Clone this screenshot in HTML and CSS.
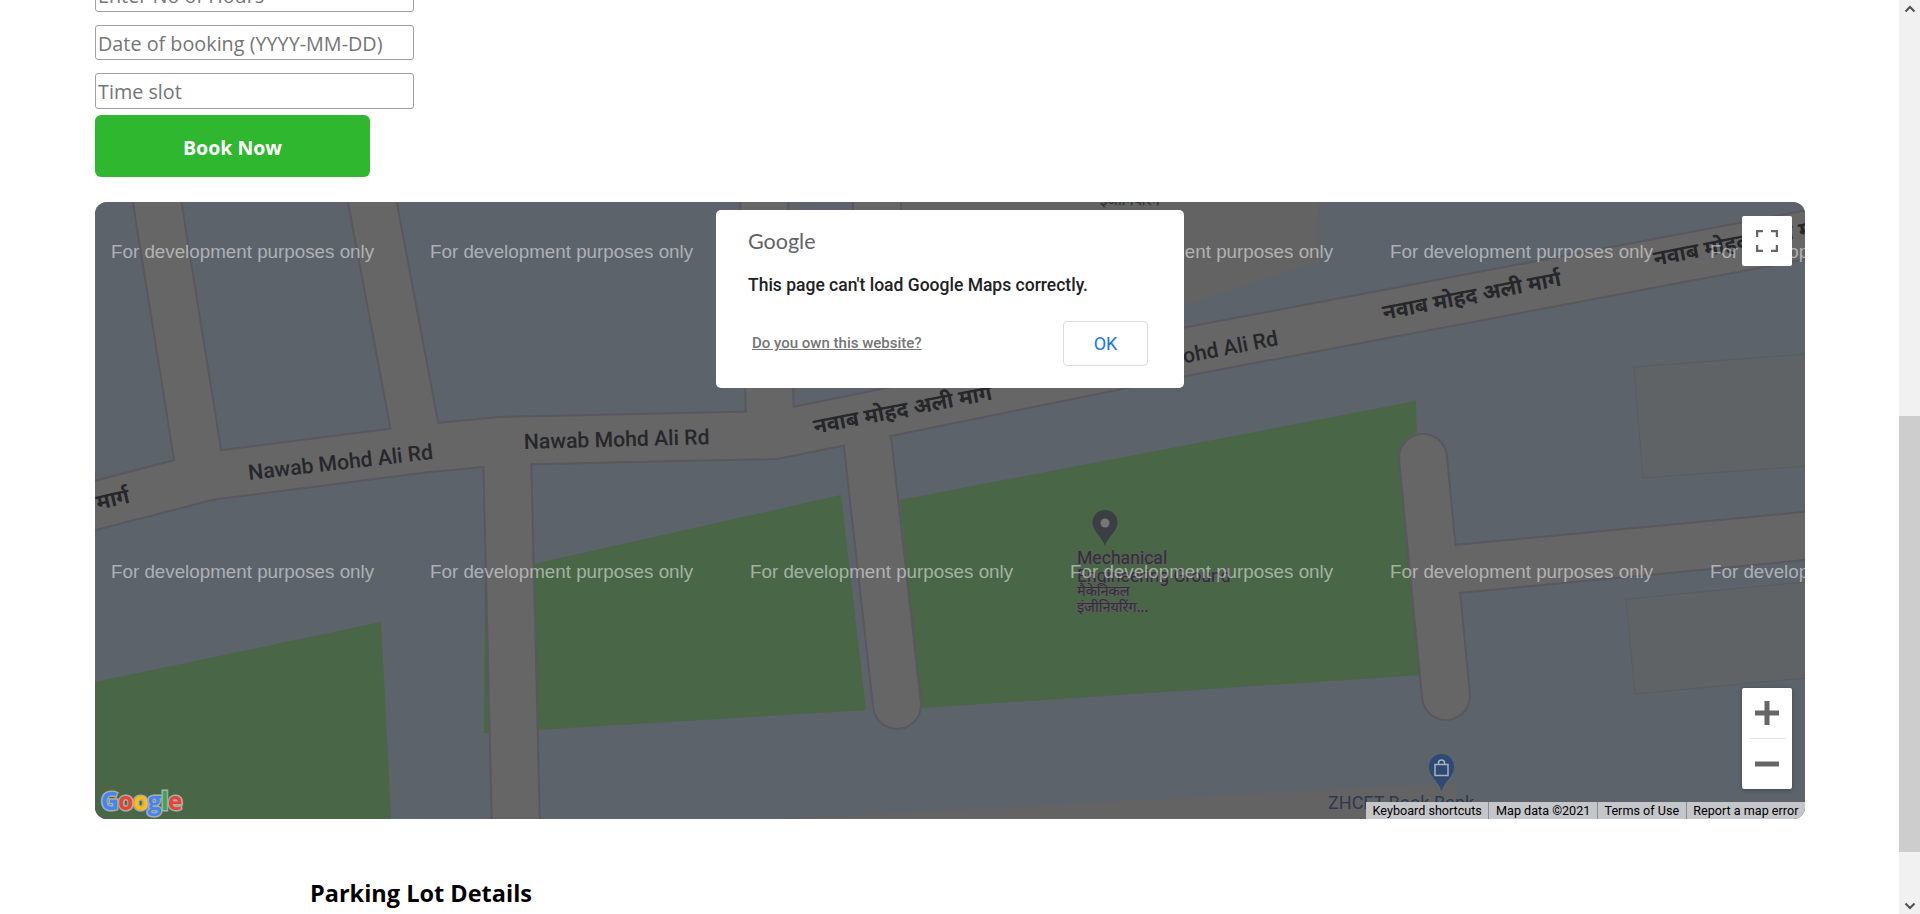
FILE: index.html
```html
<!DOCTYPE html>
<html lang="en">
<head>
  <meta charset="UTF-8">
  <meta name="viewport" content="width=device-width, initial-scale=1.0">
  <title>Book Parking</title>
  <link rel="stylesheet" href="styles.css">
</head>
<body>

<main class="page">
  <form class="booking-form">
    <input type="text" placeholder="Enter No of Hours">
    <input type="text" placeholder="Date of booking (YYYY-MM-DD)">
    <input type="text" placeholder="Time slot">
    <button type="button" class="book-btn">Book Now</button>
  </form>

  <div class="map">
    <svg class="map-canvas" viewBox="95 202 1710 617" width="1710" height="617">
      <rect x="95" y="202" width="1710" height="617" fill="#5c636b"/>

      <!-- parks -->
      <polygon class="park" points="900,500 1416,401 1421,675 920,708"/>
      <polygon class="park" points="485,575 841,495 866,710 484,733"/>
      <polygon class="park" points="95,682 381,622 391,819 95,819"/>

      <!-- buildings -->
      <polygon class="building" points="1634,367 1806,354 1806,466 1643,478"/>
      <polygon class="building" points="1626,599 1806,582 1806,678 1635,694"/>
      <polygon class="building-plain" points="900,196 1318,196 1320,261 1184,305 900,330"/>
      <polygon class="building-plain" points="769,820 1456,783 1456,820"/>

      <!-- road outlines first, fills on top so the junctions join up -->
      <g class="road-edge">
        <line x1="156" y1="195" x2="200" y2="470"/>
        <line x1="371" y1="195" x2="417" y2="440"/>
        <line x1="764" y1="195" x2="770" y2="420"/>
        <line x1="877" y1="195" x2="877" y2="300"/>
        <polyline points="85,508 209,476 428,448 502,441 775,435 1184,352 1815,233"/>
        <line x1="507" y1="450" x2="516" y2="830"/>
        <line x1="868" y1="446" x2="897" y2="705"/>
        <line x1="1423" y1="458" x2="1446" y2="696"/>
        <line x1="1446" y1="570" x2="1815" y2="535"/>
      </g>
      <g class="road-fill">
        <line x1="156" y1="195" x2="200" y2="470"/>
        <line x1="371" y1="195" x2="417" y2="440"/>
        <line x1="764" y1="195" x2="770" y2="420"/>
        <line x1="877" y1="195" x2="877" y2="300"/>
        <polyline points="85,508 209,476 428,448 502,441 775,435 1184,352 1815,233"/>
        <line x1="507" y1="450" x2="516" y2="830"/>
        <line x1="868" y1="446" x2="897" y2="705"/>
        <line x1="1423" y1="458" x2="1446" y2="696"/>
        <line x1="1446" y1="570" x2="1815" y2="535"/>
      </g>

      <!-- road names -->
      <text class="road-name" transform="translate(249 480) rotate(-6.5)">Nawab Mohd Ali Rd</text>
      <text class="road-name" transform="translate(524 449) rotate(-1.5)">Nawab Mohd Ali Rd</text>
      <text class="road-name" text-anchor="end" transform="translate(1279 345) rotate(-11)">Nawab Mohd Ali Rd</text>
      <text class="road-name hi" transform="translate(98 510) rotate(-13)">मार्ग</text>
      <text class="road-name hi" transform="translate(815 434) rotate(-11)">नवाब मोहद अली मार्ग</text>
      <text class="road-name hi" transform="translate(1384 320) rotate(-11)">नवाब मोहद अली मार्ग</text>
      <text class="road-name hi" transform="translate(1655 266) rotate(-11)">नवाब मोहद अली मार्ग</text>

      <!-- places -->
      <text class="place-name hi-small" x="1100" y="205">इंजीनियरिंग</text>
      <path class="pin-dark" d="M1105 510c-7 0-12.500 5.500-12.500 12.500 0 9 9 13 12.500 23.500 3.500-10.500 12.500-14.500 12.500-23.500 0-7-5.500-12.500-12.500-12.500z"/>
      <circle cx="1105" cy="523" r="4.500" fill="#767676"/>
      <text class="place-name" x="1077" y="564">Mechanical</text>
      <text class="place-name" x="1077" y="582">Engineering Ground</text>
      <text class="place-name hi-small" x="1077" y="596">मैकेनिकल</text>
      <text class="place-name hi-small" x="1077" y="612">इंजीनियरिंग...</text>

      <path class="pin-blue" d="M1441.500 754c-7 0-12.500 5.500-12.500 13 0 10 9 13 12.500 24 3.500-11 12.500-14 12.500-24 0-7.500-5.500-13-12.500-13z"/>
      <path class="bag" d="M1435 764.500h13v11h-13zM1438.500 764.500v-1.500a3 3 0 0 1 6 0v1.500"/>
      <text class="shop-name" x="1328" y="809">ZHCET Book Bank</text>

      <!-- watermark -->
      <g class="watermark">
        <text x="111" y="258">For development purposes only</text>
        <text x="430" y="258">For development purposes only</text>
        <text x="1070" y="258">For development purposes only</text>
        <text x="1390" y="258">For development purposes only</text>
        <text x="1710" y="258">For development purposes only</text>
        <text x="111" y="578">For development purposes only</text>
        <text x="430" y="578">For development purposes only</text>
        <text x="750" y="578">For development purposes only</text>
        <text x="1070" y="578">For development purposes only</text>
        <text x="1390" y="578">For development purposes only</text>
        <text x="1710" y="578">For development purposes only</text>
      </g>

      <text class="google-mark" x="101" y="810"><tspan fill="#4285f4">G</tspan><tspan fill="#ea4335">o</tspan><tspan fill="#fbbc05">o</tspan><tspan fill="#4285f4">g</tspan><tspan fill="#34a853">l</tspan><tspan fill="#ea4335">e</tspan></text>
    </svg>

    <div class="dialog">
      <div class="dialog-logo">Google</div>
      <div class="dialog-msg">This page can't load Google Maps correctly.</div>
      <div class="dialog-foot">
        <a class="dialog-link" href="#">Do you own this website?</a>
        <button type="button" class="dialog-ok">OK</button>
      </div>
    </div>

    <button type="button" class="map-btn fullscreen" aria-label="Toggle fullscreen view">
      <svg viewBox="0 0 22 22" width="22" height="22">
        <path d="M1 7V1h6M15 1h6v6M21 15v6h-6M7 21H1v-6" fill="none" stroke="#666" stroke-width="2.500"/>
      </svg>
    </button>

    <div class="zoom-ctl">
      <button type="button" class="zoom-btn" aria-label="Zoom in">
        <svg viewBox="0 0 24 24" width="24" height="24"><path d="M0 12h24M12 0v24" stroke="#666" stroke-width="5"/></svg>
      </button>
      <div class="zoom-sep"></div>
      <button type="button" class="zoom-btn" aria-label="Zoom out">
        <svg viewBox="0 0 24 24" width="24" height="24"><path d="M0 12h24" stroke="#666" stroke-width="5"/></svg>
      </button>
    </div>

    <div class="attribution">
      <span class="attr-item kb">Keyboard shortcuts</span>
      <span class="attr-item data">Map data ©2021</span>
      <span class="attr-item terms">Terms of Use</span>
      <span class="attr-item report">Report a map error</span>
    </div>
  </div>

  <h2 class="lot-title">Parking Lot Details</h2>
</main>

<aside class="scrollbar">
  <div class="scroll-arrow">
    <svg viewBox="0 0 12 8" width="12" height="8"><path d="M1.500 6.500L6 2l4.500 4.500" fill="none" stroke="#505050" stroke-width="2"/></svg>
  </div>
  <div class="scroll-track"><div class="scroll-thumb"></div></div>
  <div class="scroll-arrow">
    <svg viewBox="0 0 12 8" width="12" height="8"><path d="M1.500 1.500L6 6l4.500-4.500" fill="none" stroke="#505050" stroke-width="2"/></svg>
  </div>
</aside>

</body>
</html>
```

FILE: styles.css
```css
* {
  box-sizing: border-box;
}

html, body {
  height: 100%;
}

body {
  margin: 0;
  display: flex;
  height: 100vh;
  overflow: hidden;
  background-color: white;
  font-family: 'Open Sans', 'Noto Sans', Arial, sans-serif;
}

.page {
  flex: 1;
  min-width: 0;
  padding: 0 94px 0 95px;
}

.booking-form {
  display: flex;
  flex-direction: column;
  align-items: flex-start;
  margin-top: -23.4px;
}

.booking-form input {
  width: 319px;
  height: 35.4px;
  margin-bottom: 12.9px;
  padding: 2px 2px 0;
  font-family: 'Open Sans', sans-serif;
  font-size: 19.8px;
  border: 1px solid #a0a0a0;
  border-radius: 3px;
}

.booking-form input::placeholder {
  color: #757575;
}

.book-btn {
  width: 275px;
  height: 62px;
  margin-top: -6.7px;
  padding: 3px 0 0;
  border: none;
  border-radius: 6px;
  background-color: #30b730;
  color: white;
  font-family: 'Open Sans', sans-serif;
  font-size: 19.5px;
  font-weight: 700;
}

.map {
  position: relative;
  height: 617px;
  margin-top: 25px;
  border-radius: 12px;
  overflow: hidden;
  box-shadow: inset 0 0 0 1px #8f8f8f;
}

.map-canvas {
  display: block;
}

.park {
  fill: #496647;
}

.building {
  fill: #5f6366;
  stroke: #5a5c60;
  stroke-width: 1;
}

.building-plain {
  fill: #636363;
}

.road-edge {
  fill: none;
  stroke: #58585e;
  stroke-width: 50;
  stroke-linecap: round;
  stroke-linejoin: round;
}

.road-fill {
  fill: none;
  stroke: #666666;
  stroke-width: 46;
  stroke-linecap: round;
  stroke-linejoin: round;
}

.road-name {
  font-family: Roboto, sans-serif;
  font-size: 21.2px;
  font-weight: 500;
  fill: #26272a;
}

.road-name.hi {
  font-family: 'Noto Sans', 'Noto Sans Devanagari', sans-serif;
  font-weight: 700;
  font-size: 21.5px;
}

.pin-dark {
  fill: #3b3f45;
}

.pin-blue {
  fill: #2d4a75;
}

.bag {
  fill: none;
  stroke: #aab1bb;
  stroke-width: 1.500;
}

.place-name {
  font-family: Roboto, sans-serif;
  font-size: 17.6px;
  fill: #2e3034;
  stroke: #5c5c5c;
  stroke-width: 2px;
  paint-order: stroke;
}

.place-name.hi-small {
  font-family: 'Noto Sans', 'Noto Sans Devanagari', sans-serif;
  font-size: 14.5px;
}

.shop-name {
  font-family: Roboto, sans-serif;
  font-size: 18px;
  fill: #2b3a50;
}

.watermark text {
  font-family: 'Liberation Sans', Arial, sans-serif;
  font-size: 18.8px;
  fill: rgba(255, 255, 255, 0.5);
}

.google-mark {
  font-family: 'Open Sans', sans-serif;
  font-size: 24.500px;
  font-weight: 700;
  stroke: #a9ada6;
  stroke-width: 3px;
  paint-order: stroke;
  letter-spacing: -0.5px;
}

.dialog {
  position: absolute;
  top: 8px;
  left: 50%;
  width: 468px;
  height: 178px;
  margin-left: -234px;
  padding: 18px 36px 22px 32px;
  display: flex;
  flex-direction: column;
  background-color: white;
  border-radius: 5px;
}

.dialog-logo {
  font-family: Lato, sans-serif;
  font-size: 21.5px;
  line-height: 26px;
  color: #5f6368;
}

.dialog-msg {
  margin-top: 19px;
  font-family: Roboto, sans-serif;
  font-size: 17.5px;
  font-weight: 500;
  line-height: 24px;
  color: #202124;
}

.dialog-foot {
  display: flex;
  justify-content: space-between;
  align-items: center;
  margin-top: auto;
  padding-left: 4px;
}

.dialog-link {
  font-family: Roboto, sans-serif;
  font-size: 15px;
  font-weight: 500;
  color: #757575;
}

.dialog-ok {
  width: 85px;
  height: 45px;
  background-color: white;
  border: 1px solid #dadce0;
  border-radius: 4px;
  font-family: Roboto, sans-serif;
  font-size: 18px;
  color: #1a73e8;
}

.map-btn {
  position: absolute;
  top: 14px;
  right: 13px;
  width: 50px;
  height: 50px;
  padding: 0;
  display: flex;
  align-items: center;
  justify-content: center;
  background-color: white;
  border: none;
  border-radius: 2px;
}

.zoom-ctl {
  position: absolute;
  top: 486px;
  right: 13px;
  width: 50px;
  height: 101px;
  display: flex;
  flex-direction: column;
  align-items: center;
  background-color: white;
  border-radius: 2px;
  box-shadow: 0 1px 4px rgba(0, 0, 0, 0.3);
}

.zoom-btn {
  flex: 1;
  width: 100%;
  padding: 0;
  display: flex;
  align-items: center;
  justify-content: center;
  background: none;
  border: none;
}

.zoom-sep {
  width: 37px;
  height: 1px;
  background-color: #e6e6e6;
}

.attribution {
  position: absolute;
  right: 0;
  bottom: 0;
  height: 17px;
  display: flex;
  background-color: #c5c6c9;
  font-family: Roboto, sans-serif;
  font-size: 12.6px;
  line-height: 17px;
  color: black;
}

.attr-item {
  padding: 0 6.6px;
  white-space: nowrap;
  border-left: 1px solid #8e8e8e;
}

.attr-item.kb {
  border-left: none;
}

.lot-title {
  margin: 58px 0 0 215px;
  font-family: 'Open Sans', sans-serif;
  font-size: 23.5px;
  font-weight: 700;
  line-height: 32px;
  color: black;
}

.scrollbar {
  flex: none;
  width: 21px;
  display: flex;
  flex-direction: column;
  background-color: #f1f1f1;
}

.scroll-arrow {
  flex: none;
  height: 17px;
  display: flex;
  align-items: center;
  justify-content: center;
}

.scroll-track {
  flex: 1;
}

.scroll-thumb {
  height: 436px;
  margin-top: 399px;
  background-color: #cdcdcd;
}
```
